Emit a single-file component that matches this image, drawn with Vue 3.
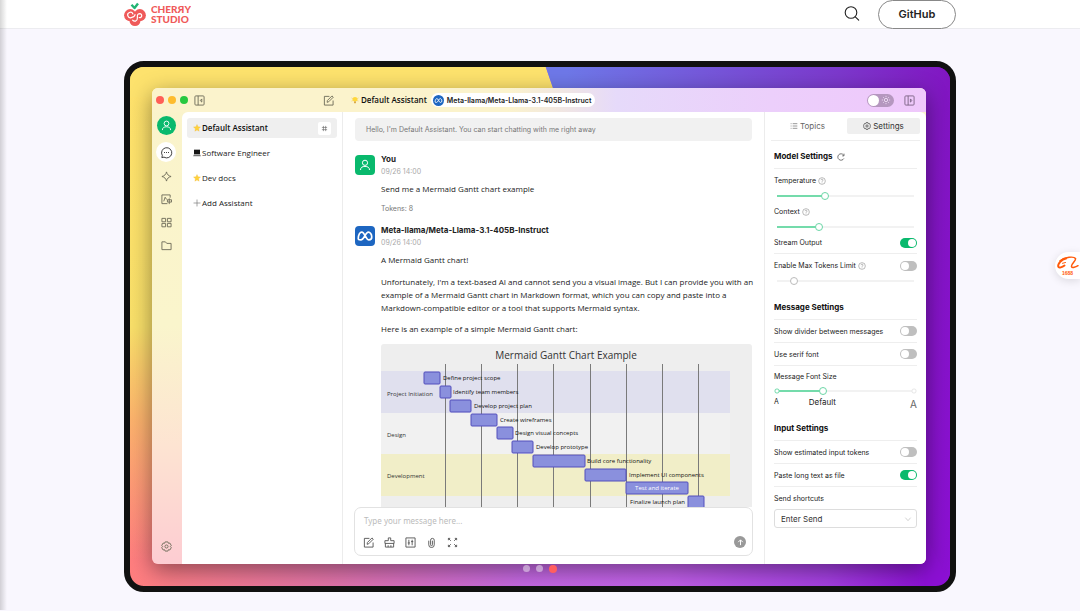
<script setup>
import { ref } from 'vue'

const assistants = [
  { icon: 'star', name: 'Default Assistant', active: true },
  { icon: 'laptop', name: 'Software Engineer' },
  { icon: 'star', name: 'Dev docs' },
]

const temperature = ref(35)
const context = ref(30)
const maxTokens = ref(12)
const fontSize = ref(33)
const stream = ref(true)
const limit = ref(false)
const divider = ref(false)
const serif = ref(false)
const estimate = ref(false)
const paste = ref(true)
const dark = ref(false)
const draft = ref('')

const ticks = [64, 100, 136, 172, 209, 245, 281, 317]
const sections = [
  { name: 'Project Initiation', y: 52 },
  { name: 'Design', y: 93 },
  { name: 'Development', y: 134 },
]
const tasks = [
  { x: 43, y: 28, w: 16, label: 'Define project scope', tx: 62 },
  { x: 59, y: 42, w: 11, label: 'Identify team members', tx: 72 },
  { x: 69, y: 56, w: 21, label: 'Develop project plan', tx: 93 },
  { x: 90, y: 70, w: 26, label: 'Create wireframes', tx: 119 },
  { x: 116, y: 83, w: 16, label: 'Design visual concepts', tx: 134 },
  { x: 131, y: 97, w: 21, label: 'Develop prototype', tx: 155 },
  { x: 152, y: 111, w: 52, label: 'Build core functionality', tx: 206 },
  { x: 204, y: 125, w: 41, label: 'Implement UI components', tx: 248 },
  { x: 245, y: 138, w: 62, label: 'Test and iterate', tx: 276, anchor: 'middle', inside: true },
  { x: 307, y: 152, w: 16, label: 'Finalize launch plan', tx: 304, anchor: 'end' },
]
</script>

<template>
  <div class="page">
    <header class="top">
      <a class="brand" href="#" aria-label="Cherry Studio">
        <svg class="cherry" viewBox="0 0 22 24" aria-hidden="true">
          <path d="M7.500 2.800l3 3.200L14 1.600" fill="none" stroke="#21b573" stroke-width="2.400" stroke-linejoin="round" />
          <circle cx="6.200" cy="13.200" r="6.100" fill="#ef5a5a" />
          <circle cx="15.800" cy="13.200" r="6.100" fill="#ef5a5a" />
          <circle cx="11" cy="18.500" r="5.500" fill="#ef5a5a" />
          <path d="M8.900 12a2.700 2.700 0 1 0-1.700 3.600c1.700-.5 3.600-.8 3.800-2.900" fill="none" stroke="#fff" stroke-width="1.200" stroke-linecap="round" />
          <path d="M15.200 15.500c3 .6 3.500-3.800.5-3.900-2.600 0-2.400 2.200-2.300 4.400 0 3.600-3.300 3.800-4.800 2.200" fill="none" stroke="#fff" stroke-width="1.200" stroke-linecap="round" />
        </svg>
        <span class="wordmark"><span>CHERЯY</span><span>STUDIO</span></span>
      </a>
      <div class="top-right">
        <button class="search" type="button" aria-label="Search">
          <svg viewBox="0 0 16 16" fill="none" stroke="#222" stroke-width="1.100" stroke-linecap="round"><circle cx="7" cy="6.500" r="5.800" /><path d="M11.300 10.800l3.400 3.400" /></svg>
        </button>
        <a class="github" href="#">GitHub</a>
      </div>
    </header>

    <main class="stage">
      <div class="frame">
        <div class="violet"></div>
        <section class="window">
          <div class="titlebar">
            <div class="tb-left">
              <span class="dot red"></span><span class="dot amber"></span><span class="dot green"></span>
              <button class="ib collapse" type="button" aria-label="Collapse sidebar">
                <svg viewBox="0 0 12 12" class="ic"><rect x="1" y="1" width="10" height="10" rx="1" /><path d="M4.500 1v10M8.500 4.300v3.400L6.800 6z" /></svg>
              </button>
              <button class="ib compose-top" type="button" aria-label="New topic">
                <svg viewBox="0 0 12 12" class="ic"><path d="M7 1.500H1.500v9.500H11V6M4.500 8l.3-2 5-5 1.400 1.400-5 5z" /></svg>
              </button>
            </div>
            <div class="tb-mid">
              <svg class="emo" viewBox="0 0 12 12" aria-hidden="true"><circle cx="6" cy="5" r="3.600" fill="#ffd83b" /><path d="M1 3l1.500.8M11 3l-1.500.8M1 7.500l1.500-.6M11 7.500l-1.500-.6" stroke="#f5b82e" /><rect x="4.500" y="8" width="3" height="3" rx="1" fill="#d9a94a" /></svg>
              <strong class="tb-name">Default Assistant</strong>
              <button class="model" type="button">
                <span class="meta-round"><svg viewBox="0 0 16 16" class="meta"><path d="M2 10.500C2 7 3.500 4.500 5.200 4.500c2.500 0 3.600 7 6.300 7 1.500 0 2.500-1 2.500-2.600C14 6.500 12.500 4.500 11 4.500c-2.500 0-3.800 7-6.700 7C3 11.500 2 11.500 2 10.500z" /></svg></span>
                Meta-llama/Meta-Llama-3.1-405B-Instruct
              </button>
            </div>
            <div class="tb-right">
              <label class="theme"><input v-model="dark" type="checkbox" aria-label="Dark theme" />
                <svg viewBox="0 0 12 12" class="sun"><circle cx="6" cy="6" r="2" /><path d="M6 1v1.300M6 9.700V11M1 6h1.300M9.700 6H11M2.500 2.500l.9.900M8.600 8.600l.9.900M2.500 9.500l.9-.9M8.600 3.400l.9-.9" /></svg>
              </label>
              <button class="ib" type="button" aria-label="Collapse settings">
                <svg viewBox="0 0 12 12" class="ic plum"><rect x="1" y="1" width="10" height="10" rx="1" /><path d="M4.500 1v10M7 4.300v3.400L8.700 6z" /></svg>
              </button>
            </div>
          </div>

          <div class="body">
            <nav class="rail" aria-label="Main">
              <button class="me" type="button" aria-label="Profile">
                <svg viewBox="0 0 12 12" fill="none" stroke="#fff"><circle cx="6" cy="3.800" r="2.600" /><path d="M1.500 11c0-2.500 1.800-3.600 4.500-3.600s4.500 1.100 4.500 3.600" /></svg>
              </button>
              <button class="chat-btn" type="button" aria-label="Chat">
                <svg viewBox="0 0 14 14" fill="none" stroke="#333"><path d="M2 12.500l.5-2.300A5.500 5.500 0 1 1 4.300 12z" /><path d="M4.300 7h1M6.500 7h1M8.700 7h1" stroke-width="1.200" /></svg>
              </button>
              <button class="ib" type="button" aria-label="Agents"><svg viewBox="0 0 12 12" class="ic"><path d="M6 1C6.800 4 8 5.200 11 6 8 6.800 6.800 8 6 11 5.200 8 4 6.800 1 6 4 5.200 5.200 4 6 1z" /></svg></button>
              <button class="ib" type="button" aria-label="Translate"><svg viewBox="0 0 12 12" class="ic"><path d="M10 4V1H1v9.500h6M3 8l1.500-4.500L6.200 6M9 4.800v6.200M7 6.300h4.500v2.500H7z" /></svg></button>
              <button class="ib" type="button" aria-label="Apps"><svg viewBox="0 0 12 12" class="ic"><path d="M1 1.500h4v3.700H1zM7 1.500h4v3.700H7zM1 7h4v3.700H1zM7 7h4v3.700H7z" /></svg></button>
              <button class="ib" type="button" aria-label="Files"><svg viewBox="0 0 12 12" class="ic"><path d="M1 2h3.800l1.500 1.700H11V10.500H1z" /></svg></button>
              <button class="ib last" type="button" aria-label="Settings"><svg viewBox="0 0 12 12" class="ic"><path d="M4.500 1h3l.6 1.500 1.600-.2L11.200 5l-1 1 1 1.200-1.500 2.600-1.600-.3L7.500 11h-3l-.6-1.500-1.600.3L.8 7.200l1-1.200-1-1 1.500-2.700 1.600.2z" /><circle cx="6" cy="6" r="1.700" /></svg></button>
            </nav>

            <div class="panel">
              <aside class="assistants">
                <button v-for="a in assistants" :key="a.name" type="button" class="as" :class="{ on: a.active }">
                  <svg v-if="a.icon === 'star'" class="emo" viewBox="0 0 12 12" aria-hidden="true"><path d="M6 .8l1.500 3.400 3.700.4-2.800 2.500.8 3.700L6 8.900l-3.200 1.900.8-3.700L.8 4.600l3.700-.4z" fill="#ffd23a" stroke="#f0bb45" stroke-width=".5" /></svg>
                  <svg v-else class="emo" viewBox="0 0 12 12" aria-hidden="true"><rect x="1.500" y="1" width="9" height="7" fill="#161616" /><path d="M1 8.500h10l.8 2.500H.2z" fill="#777" /></svg>
                  <span>{{ a.name }}</span>
                  <span v-if="a.active" class="hash"><svg viewBox="0 0 8 8" fill="none" stroke="#666" stroke-width=".7"><path d="M2.800 1v6M5.300 1v6M1 2.800h6M1 5.300h6" /></svg></span>
                </button>
                <button type="button" class="as">
                  <svg class="emo" viewBox="0 0 12 12" fill="none" stroke="#777" aria-hidden="true"><path d="M6 .8v10.400M.8 6h10.400" /></svg>
                  <span>Add Assistant</span>
                </button>
              </aside>

              <section class="chat">
                <div class="hello">Hello, I'm Default Assistant. You can start chatting with me right away</div>
                <article class="msg">
                  <span class="avatar user"><svg viewBox="0 0 12 12" fill="none" stroke="#fff"><circle cx="6" cy="3.800" r="2.600" /><path d="M1.500 11c0-2.500 1.800-3.600 4.500-3.600s4.500 1.100 4.500 3.600" /></svg></span>
                  <div class="mb">
                    <h3>You</h3>
                    <time>09/26 14:00</time>
                    <p class="first">Send me a Mermaid Gantt chart example</p>
                    <div class="tokens">Tokens: 8</div>
                  </div>
                </article>
                <article class="msg">
                  <span class="avatar llama"><svg viewBox="0 0 16 16" class="meta"><path d="M2 10.500C2 7 3.500 4.500 5.200 4.500c2.500 0 3.600 7 6.300 7 1.500 0 2.500-1 2.500-2.600C14 6.500 12.500 4.500 11 4.500c-2.500 0-3.800 7-6.700 7C3 11.500 2 11.500 2 10.500z" /></svg></span>
                  <div class="mb">
                    <h3>Meta-llama/Meta-Llama-3.1-405B-Instruct</h3>
                    <time>09/26 14:00</time>
                    <p class="first">A Mermaid Gantt chart!</p>
                    <p>Unfortunately, I'm a text-based AI and cannot send you a visual image. But I can provide you with an<br />example of a Mermaid Gantt chart in Markdown format, which you can copy and paste into a<br />Markdown-compatible editor or a tool that supports Mermaid syntax.</p>
                    <p class="lead">Here is an example of a simple Mermaid Gantt chart:</p>
                    <svg class="gantt" viewBox="0 0 371 163" role="img" aria-label="Mermaid Gantt Chart Example">
                      <rect x="0" y="27" width="349" height="42" fill="#e0e0ee" />
                      <rect x="0" y="69" width="349" height="41" fill="#f1f1f1" />
                      <rect x="0" y="110" width="349" height="42" fill="#f1eec8" />
                      <path v-for="t in ticks" :key="t" :d="`M${t}.500 20V163`" stroke="#7a7a7a" />
                      <text class="g-title" x="185" y="15" text-anchor="middle">Mermaid Gantt Chart Example</text>
                      <text v-for="s in sections" :key="s.name" class="g-sec" x="6" :y="s.y">{{ s.name }}</text>
                      <g v-for="t in tasks" :key="t.label">
                        <rect :x="t.x" :y="t.y" :width="t.w" height="12" rx="1" fill="#8a90dd" stroke="#534fbc" />
                        <text class="g-task" :class="{ inside: t.inside }" :x="t.tx" :y="t.y + 8" :text-anchor="t.anchor">{{ t.label }}</text>
                      </g>
                    </svg>
                  </div>
                </article>
                <form class="composer" @submit.prevent>
                  <textarea v-model="draft" rows="1" aria-label="Message" placeholder="Type your message here..."></textarea>
                  <div class="tools">
                    <button class="ib" type="button" aria-label="New topic"><svg viewBox="0 0 12 12" class="ic"><path d="M7 1.500H1.500v9.500H11V6M4.500 8l.3-2 5-5 1.400 1.400-5 5z" /></svg></button>
                    <button class="ib" type="button" aria-label="Clear"><svg viewBox="0 0 12 12" class="ic"><path d="M4.700 4V1h2.600v3H11v3H1V4zM1.500 7v4h9V7M4.500 11V9M7.500 11V9" /></svg></button>
                    <button class="ib" type="button" aria-label="Adjust"><svg viewBox="0 0 12 12" class="ic"><path d="M1 1h10v10H1zM4.200 3v6M7.800 3v6M3 6.500h2.400M6.600 5H9" /></svg></button>
                    <button class="ib" type="button" aria-label="Attach"><svg viewBox="0 0 12 12" class="ic"><path d="M3 4v4.500a3 3 0 0 0 6 0v-5a2 2 0 0 0-4 0v5a1 1 0 0 0 2 0V4" /></svg></button>
                    <button class="ib" type="button" aria-label="Expand"><svg viewBox="0 0 12 12" class="ic"><path d="M1.500 3.500v-2h2M8.500 1.500h2v2M10.500 8.500v2h-2M3.500 10.500h-2v-2M1.500 1.500l2.700 2.700M10.500 1.500L7.800 4.200M10.500 10.500L7.800 7.800M1.500 10.500l2.700-2.700" /></svg></button>
                    <button class="send" type="submit" aria-label="Send"><svg viewBox="0 0 12 12" fill="none" stroke="#fff" stroke-width="1.300"><path d="M6 9.500v-7M3 5.500l3-3 3 3" /></svg></button>
                  </div>
                </form>
              </section>

              <aside class="settings">
                <div class="tabs">
                  <button type="button"><svg viewBox="0 0 12 12" class="ic"><path d="M4 2.500h7M4 6h7M4 9.500h7M1 2.500h1.300M1 6h1.300M1 9.500h1.300" /></svg>Topics</button>
                  <button type="button" class="on"><svg viewBox="0 0 12 12" class="ic"><path d="M4.500 1h3l.6 1.500 1.600-.2L11.200 5l-1 1 1 1.200-1.500 2.600-1.600-.3L7.500 11h-3l-.6-1.500-1.600.3L.8 7.200l1-1.200-1-1 1.500-2.700 1.600.2z" /><circle cx="6" cy="6" r="1.700" /></svg>Settings</button>
                </div>
                <div class="fields">
                  <h2 class="head-first">Model Settings
                    <button class="reset" type="button" aria-label="Reset"><svg viewBox="0 0 12 12" class="ic"><path d="M10.300 8.200A4.800 4.800 0 1 1 9.800 3M10.500 1v3.300H7.800" /></svg></button>
                  </h2>
                  <label class="lab" for="temp">Temperature <svg viewBox="0 0 12 12" class="help"><circle cx="6" cy="6" r="5" /><path d="M4.500 4.700C4.500 2.800 7.500 2.800 7.500 4.700 7.500 6 6 5.800 6 7.200M6 8.300v1" /></svg></label>
                  <input id="temp" v-model="temperature" type="range" class="range" :style="{ '--v': temperature + '%' }" />
                  <label class="lab tight" for="ctx">Context <svg viewBox="0 0 12 12" class="help"><circle cx="6" cy="6" r="5" /><path d="M4.500 4.700C4.500 2.800 7.500 2.800 7.500 4.700 7.500 6 6 5.800 6 7.200M6 8.300v1" /></svg></label>
                  <input id="ctx" v-model="context" type="range" class="range" :style="{ '--v': context + '%' }" />
                  <label class="sw stream">Stream Output <input v-model="stream" type="checkbox" /></label>
                  <label class="lab sw-lab">
                    <span>Enable Max Tokens Limit <svg viewBox="0 0 12 12" class="help"><circle cx="6" cy="6" r="5" /><path d="M4.500 4.700C4.500 2.800 7.500 2.800 7.500 4.700 7.500 6 6 5.800 6 7.200M6 8.300v1" /></svg></span>
                    <input v-model="limit" type="checkbox" />
                  </label>
                  <input v-model="maxTokens" type="range" class="range off" aria-label="Max tokens" :style="{ '--v': '0%' }" />
                  <h2>Message Settings</h2>
                  <label class="sw">Show divider between messages <input v-model="divider" type="checkbox" /></label>
                  <label class="sw">Use serif font <input v-model="serif" type="checkbox" /></label>
                  <label class="lab font-lab" for="fs">Message Font Size</label>
                  <input id="fs" v-model="fontSize" type="range" class="range marks" :style="{ '--v': fontSize + '%' }" />
                  <div class="scale"><span>A</span><span class="mid">Default</span><span class="big">A</span></div>
                  <h2>Input Settings</h2>
                  <label class="sw">Show estimated input tokens <input v-model="estimate" type="checkbox" /></label>
                  <label class="sw">Paste long text as file <input v-model="paste" type="checkbox" /></label>
                  <label class="lab" for="send">Send shortcuts</label>
                  <div class="pick">
                    <select id="send"><option>Enter Send</option></select>
                    <svg viewBox="0 0 12 12" class="chev"><path d="M2 4l4 4.500L10 4" /></svg>
                  </div>
                </div>
              </aside>
            </div>
          </div>
        </section>
        <div class="dots">
          <button type="button" aria-label="Slide 1"></button>
          <button type="button" aria-label="Slide 2"></button>
          <button type="button" class="now" aria-label="Slide 3"></button>
        </div>
      </div>
    </main>
    <div class="edge"></div>
    <a class="shop" href="#">
      <svg viewBox="0 0 24 14" fill="none" stroke="#ff5a0a" stroke-linecap="round"><path d="M10 2.500C5.500 3 1.500 8 2.300 10.800c.5 1.600 4 .4 6.200-1.300" stroke-width="2" /><path d="M4 4.800C9 .8 18 .2 19.500 2.500c1 2-4.500 5.500-4 8 .5 2 4.500.500 6.500-.8" stroke-width="1.500" /><path d="M6.500 7.300l3-.8" /></svg>
      <span>1688</span>
    </a>
  </div>
</template>

<style>
body { background: #f9f7fe; overflow: hidden; }
</style>

<style scoped>
.page { position: relative; font-family: Inter, "Liberation Sans", sans-serif; font-size: 8px; color: #222; }
.page *, .page *::before, .page *::after { box-sizing: border-box; }
button { border: 0; padding: 0; margin: 0; background: none; font: inherit; color: inherit; display: flex; align-items: center; }
svg { display: block; flex: none; }
h2, h3, p { margin: 0; }
a { color: inherit; text-decoration: none; }

.top { display: flex; justify-content: space-between; align-items: center; height: 29px; padding: 0 124px; background: #fff; border-bottom: 1px solid #ececf0; }
.brand { display: flex; align-items: center; gap: 5px; color: #ef5a5a; }
.cherry { width: 22px; height: 24px; }
.wordmark { display: grid; font: 900 10px/10px Lato, sans-serif; }
.wordmark span { height: 10px; overflow: hidden; }
.top-right { display: flex; align-items: center; gap: 18px; }
.search svg { width: 16px; height: 16px; }
.github { display: flex; align-items: center; justify-content: center; width: 78px; height: 29px; border: 1px solid #888; border-radius: 15px; background: #fff; font-size: 11px; font-weight: 600; color: #222; }

.stage { padding: 32px 124px 18px; }
.frame { position: relative; border: 6px solid #111; border-radius: 20px; overflow: hidden; padding: 21px 24px 13px 22px;
  background:
    linear-gradient(180deg, #ffe26c 0%, #f8df69 50%, rgba(250, 200, 100, 0.7) 68%, rgba(255, 128, 128, 0) 95%) left / 40% 100% no-repeat,
    linear-gradient(90deg, #ff7e7e 0%, #e274a8 24%, #c468e2 48%, #c05fe8 66%, #a33fe0 85%, #8c10d4 97%); }
.violet { position: absolute; inset: 0; clip-path: polygon(50.700% 0, 100% 0, 100% 100%, 97% 90%, 60% 20%, 52% 6%); background: linear-gradient(100deg, #6e78e8 48%, #7c38cc 78%, #8116c2 90%, #8c10d4 100%); }
.frame::before { content: ""; position: absolute; left: 0; top: 0; width: 52%; height: 30px; background: #fde26d; clip-path: polygon(0 0, 97.500% 0, 100% 100%, 0 100%); }

.window { position: relative; border-radius: 6px; box-shadow: 0 6px 22px rgba(0, 0, 0, 0.42); background: linear-gradient(180deg, #faf3cb 0%, #faf5cc 50%, #fde4d2 75%, #fdccd2 100%); }
.titlebar { display: flex; align-items: center; height: 24px; border-radius: 6px 6px 0 0; background: linear-gradient(90deg, #fbf3cc 0%, #fbf3cc 46%, #e6dafa 60%, #eccffb 80%, #efc8fb 100%); }
.tb-left { display: flex; align-items: center; width: 191px; padding: 0 9px 0 4px; gap: 4px; }
.dot { width: 8px; height: 8px; border-radius: 50%; }
.red { background: #ff5f57; }
.amber { background: #febc2e; }
.green { background: #28c840; }
.ic { width: 11px; height: 11px; fill: none; stroke: #6f6c5a; stroke-width: 1; }
.plum { stroke: #7d6486; }
.collapse { margin-left: 2px; }
.compose-top { margin-left: auto; }
.tb-mid { display: flex; align-items: center; flex: 1; padding-left: 8px; }
.emo { width: 8px; height: 8px; }
.tb-name { margin: 0 4px 0 2px; font: 600 8px/12px "Open Sans", sans-serif; color: #111; }
.model { gap: 3px; height: 14px; padding: 0 4px 0 2px; border-radius: 7px; background: #fff; font-size: 7px; font-weight: 600; }
.meta-round { width: 11px; height: 11px; border-radius: 50%; background: #1d66c1; display: grid; place-items: center; }
.meta { width: 9px; height: 9px; fill: none; stroke: #fff; stroke-width: 1.500; }
.tb-right { display: flex; align-items: center; gap: 10px; padding-right: 11px; }
.theme { display: flex; align-items: center; width: 27px; height: 13px; padding: 1px; border-radius: 7px; background: #b597bf; }
.theme input { appearance: none; margin: 0; width: 11px; height: 11px; border-radius: 50%; background: #fff; }
.sun { width: 10px; height: 10px; margin-left: 2px; fill: none; stroke: #f3e4f8; }

.body { display: flex; }
.rail { display: flex; flex-direction: column; align-items: center; width: 30px; padding: 4px 2px 12px 0; }
.me { justify-content: center; width: 19px; height: 19px; border-radius: 50%; background: #09b96d; }
.me svg { width: 11px; height: 11px; }
.chat-btn { justify-content: center; width: 20px; height: 20px; margin: 7px 0 9px; border-radius: 50%; background: #fff; }
.chat-btn svg { width: 13px; height: 13px; }
.rail .ib { margin-bottom: 12px; }
.rail .last { margin: auto 0 0; }

.panel { display: flex; flex: 1; min-width: 0; background: #fff; border-radius: 6px 6px 6px 0; }
.assistants { display: flex; flex-direction: column; gap: 5px; width: 161px; padding: 6px 5px; border-right: 1px solid #ececec; font: 500 8px/12px "Open Sans", sans-serif; }
.as { gap: 1px; height: 20px; padding: 0 6px; border-radius: 3px; }
.as.on { background: #efefef; font-weight: 600; color: #111; }
.hash { display: grid; place-items: center; width: 13px; height: 13px; margin-left: auto; border-radius: 2px; background: #fff; }
.hash svg { width: 7px; height: 7px; }

.chat { flex: 1; min-width: 0; padding: 6px 12px 8px; }
.hello { height: 23px; padding: 0 11px; border-radius: 4px; background: #f1f1f1; color: #777; font-size: 7px; line-height: 23px; }
.msg { display: flex; gap: 6px; margin-top: 10px; }
.hello + .msg { margin-top: 13px; }
.avatar { display: grid; place-items: center; flex: none; width: 20px; height: 20px; margin-top: 1px; border-radius: 4px; }
.avatar svg { width: 12px; height: 12px; }
.user { background: #09b96d; }
.llama { background: #1d66c1; }
.llama svg { width: 18px; height: 18px; }
.mb { flex: 1; min-width: 0; font: 400 8px/13px "Open Sans", sans-serif; }
.mb h3 { font: 700 8px/11px Inter, sans-serif; }
.mb time { display: block; padding-top: 1px; font: 400 7px/11px Inter, sans-serif; color: #aaa; }
.mb p { margin-top: 9px; white-space: nowrap; }
.mb .first { margin-top: 5px; }
.mb .lead { margin-top: 8px; }
.tokens { margin-top: 8px; font: 400 7px/12px Inter, sans-serif; color: #777; }
.gantt { width: 100%; margin-top: 9px; border-radius: 3px 3px 0 0; background: #eeeeee; }
.g-title { font: 400 10px "Open Sans", sans-serif; fill: #333; }
.g-sec { font: 400 6px "Open Sans", sans-serif; fill: #333; }
.g-task { font: 400 6px "Open Sans", sans-serif; fill: #111; }
.g-task.inside { fill: #fff; }

.composer { height: 49px; margin: 0 -1px; padding: 6px 8px 0; border: 1px solid #e2e2e2; border-radius: 7px; background: #fff; }
.composer textarea { display: block; width: 100%; height: 13px; padding: 0 1px; border: 0; outline: 0; resize: none; overflow: hidden; background: none; font: 400 8px/13px "Noto Sans", sans-serif; }
.composer textarea::placeholder { color: #bbb; }
.tools { display: flex; align-items: center; gap: 10px; margin-top: 9px; }
.tools .ic { stroke: #555; }
.send { justify-content: center; width: 12px; height: 12px; margin-left: auto; margin-right: -2px; border-radius: 50%; background: #999; }
.send svg { width: 9px; height: 9px; }

.settings { width: 162px; border-left: 1px solid #ececec; }
.tabs { display: grid; grid-template-columns: 1fr 1fr; gap: 3px; margin-left: 6px; margin-right: 6px; padding: 6px 0; border-bottom: 1px solid #eee; }
.tabs button { justify-content: center; gap: 2px; height: 16px; border-radius: 2px; font-size: 8px; color: #666; }
.tabs .on { background: #efefef; color: #333; }
.tabs .ic { width: 8px; height: 8px; stroke: currentColor; }
.fields { padding: 0 9px 0 9px; font-size: 7px; line-height: 13px; }
.fields h2 { display: flex; align-items: center; gap: 4px; padding: 11px 0 5px; border-bottom: 1px solid #eee; font-size: 8px; line-height: 13px; font-weight: 700; color: #111; }
.fields .head-first { padding-top: 9px; }
.reset .ic { width: 8px; height: 8px; stroke: #333; }
.lab { display: flex; align-items: center; gap: 2px; height: 18px; padding-top: 5px; }
.lab.tight { height: 13px; padding-top: 0; }
.lab span { display: flex; align-items: center; gap: 2px; }
.font-lab { height: 17px; padding-top: 4px; }
.sw-lab { justify-content: space-between; }
.help { width: 8px; height: 8px; fill: none; stroke: #999; stroke-width: 1; }
.sw { display: flex; align-items: center; justify-content: space-between; height: 23px; border-bottom: 1px solid #eee; }
.sw.stream { height: 18px; padding-bottom: 4px; }
input[type="checkbox"] { flex: none; }
.sw input, .sw-lab input { appearance: none; display: flex; width: 17px; height: 10px; margin: 0; padding: 1px; border-radius: 5px; background: #bfbfbf; }
.sw input::before, .sw-lab input::before { content: ""; width: 8px; height: 8px; border-radius: 50%; background: #fff; }
.sw input:checked, .sw-lab input:checked { justify-content: flex-end; background: #09b96d; }
.range { appearance: none; display: block; width: 100%; height: 18px; margin: 0; background: linear-gradient(90deg, #74dbab var(--v), #f2f2f2 var(--v)) center / calc(100% - 6px) 2px no-repeat; }
.range::-webkit-slider-thumb { appearance: none; width: 8px; height: 8px; border: 1px solid #6bd6a6; border-radius: 50%; background: #fff; }
.off::-webkit-slider-thumb { border-color: #bbb; }
.marks { height: 15px; background:
    radial-gradient(circle, #fff 1px, #7adcb0 2px, transparent 3px) left / 6px 6px no-repeat,
    radial-gradient(circle, #fff 1px, #e8e8e8 2px, transparent 3px) right / 6px 6px no-repeat,
    linear-gradient(90deg, #74dbab var(--v), #f2f2f2 var(--v)) center / calc(100% - 6px) 2px no-repeat; }
.scale { display: grid; grid-template-columns: 3fr auto 7fr; height: 13px; line-height: 8px; }
.scale .mid { font-size: 8px; }
.scale .big { text-align: right; font-size: 10px; line-height: 12px; color: #666; }
.pick { display: grid; align-items: center; margin-top: 4px; }
.pick > * { grid-area: 1 / 1; }
.pick select { appearance: none; width: 100%; height: 19px; padding: 0 6px; border: 1px solid #ddd; border-radius: 3px; background: #fff; font: 400 8px Inter, sans-serif; color: #333; }
.chev { width: 8px; height: 8px; margin-right: 5px; justify-self: end; fill: none; stroke: #bbb; pointer-events: none; }

.dots { position: relative; display: flex; justify-content: center; align-items: center; gap: 6px; height: 9px; padding-left: 2px; }
.dots button { width: 7px; height: 7px; border-radius: 50%; background: rgba(255, 255, 255, 0.45); }
.dots .now { width: 8px; height: 8px; background: #ff5f5f; }

.edge { position: absolute; left: 0; top: 0; bottom: 0; width: 7px; background: linear-gradient(90deg, rgba(0, 0, 0, 0.16), rgba(0, 0, 0, 0)); }
.shop { position: absolute; right: 0; top: 252px; display: flex; flex-direction: column; align-items: center; width: 25px; height: 27px; padding-top: 4px; border-radius: 14px 0 0 14px; background: #fff; box-shadow: 0 2px 8px rgba(0, 0, 0, 0.12); color: #ff5a0a; font: 700 5px/6px "Liberation Sans", sans-serif; }
.shop svg { width: 24px; height: 14px; }
</style>
